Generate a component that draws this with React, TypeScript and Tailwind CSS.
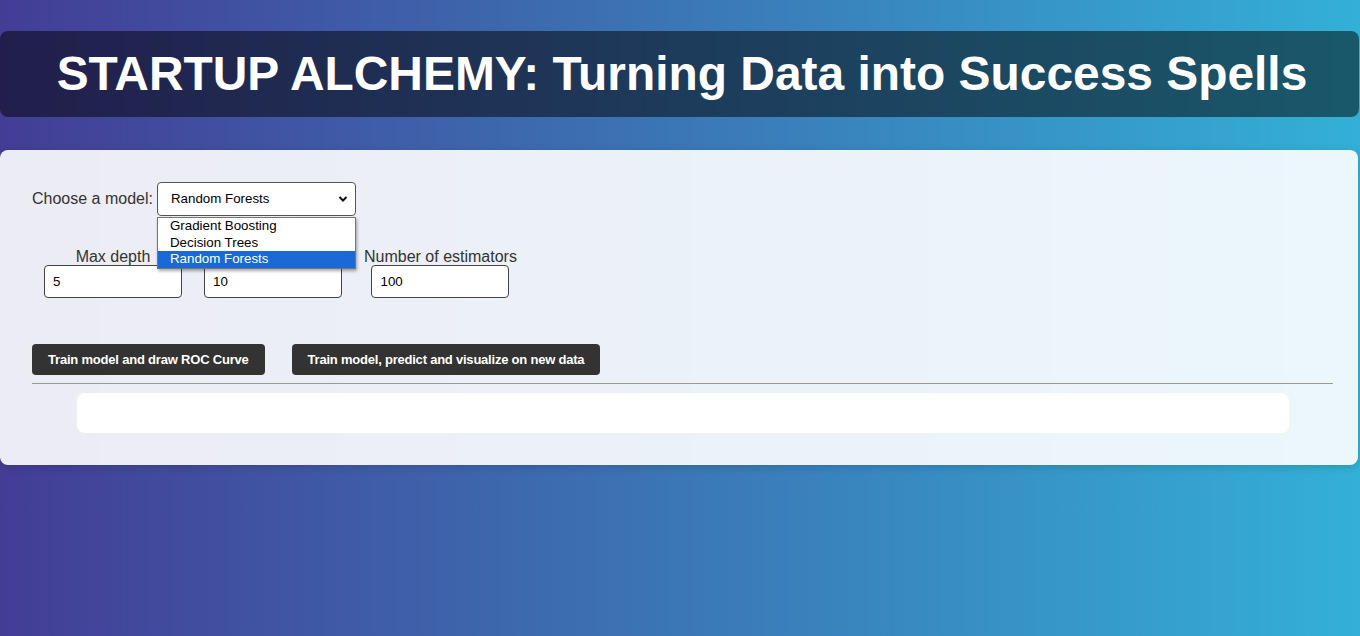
import React, { useState } from 'react';

const models = ['Gradient Boosting', 'Decision Trees', 'Random Forests'];

const params = [
  { label: 'Max depth', value: '5' },
  { label: 'Min samples split', value: '10' },
  { label: 'Number of estimators', value: '100' },
];

export default function App() {
  const [model, setModel] = useState('Random Forests');

  return (
    <div
      className="min-h-[636px] w-full bg-[linear-gradient(to_right,#433d96,#33b0d6)] pt-[31px] pb-10"
      style={{ fontFamily: '"Liberation Sans", Arial, sans-serif' }}
    >
      {/* Header */}
      <div className="mr-[1px] flex h-[86px] items-center justify-center rounded-lg bg-black/50 pl-[5px]">
        <h1 className="text-[47.9px] font-bold leading-none text-white">
          STARTUP ALCHEMY: Turning Data into Success Spells
        </h1>
      </div>

      {/* Main card */}
      <div className="mt-[33px] mr-[2px] rounded-lg bg-white/90 px-8 pt-8 pb-8 shadow-[0_2px_8px_rgba(0,0,0,0.15)]">
        <div className="flex items-center">
          <label className="mr-[4px] text-[16px] text-[#333]">Choose a model:</label>
          <div className="relative">
            <div className="flex h-[34px] w-[199px] items-center justify-between rounded-[4px] border border-[#555] bg-white pr-[7px] pl-[13px] text-[13.33px] text-black">
              <span>{model}</span>
              <svg width="10" height="8" viewBox="0 0 10 8">
                <path d="M1.5 2l3.5 3.5L8.5 2" fill="none" stroke="#111" strokeWidth="2" />
              </svg>
            </div>
            {/* open dropdown list */}
            <div className="absolute top-[35px] left-0 z-10 w-[199px] border border-[#767676] bg-white text-[13.33px] leading-[16.5px] text-black shadow-[1px_2px_3px_rgba(0,0,0,0.35)]">
              {models.map((m) => (
                <div
                  key={m}
                  onClick={() => setModel(m)}
                  className={m === model ? 'bg-[#1a69d4] pl-[12px] text-white' : 'pl-[12px]'}
                >
                  {m}
                </div>
              ))}
            </div>
          </div>
        </div>

        {/* Parameters */}
        <div className="mt-[32px] ml-[12px] flex items-end gap-[22px]">
          {params.map((p) => (
            <div key={p.label} className="flex flex-col items-center">
              <label className="text-[16px] leading-[18px] text-[#333]">{p.label}</label>
              <input
                defaultValue={p.value}
                className="mt-[-1px] h-[33px] w-[138px] rounded-[4px] border border-[#444] bg-white px-[8px] text-[13.33px] text-black"
              />
            </div>
          ))}
        </div>

        {/* Buttons */}
        <div className="mt-[46px] flex gap-[27px]">
          <button className="h-[31px] rounded-[4px] bg-[#333] px-4 text-[13px] font-bold tracking-[-0.2px] text-white">
            Train model and draw ROC Curve
          </button>
          <button className="h-[31px] rounded-[4px] bg-[#333] px-4 text-[13px] font-bold tracking-[-0.22px] text-white">
            Train model, predict and visualize on new data
          </button>
        </div>

        <hr className="mt-2 mr-[-7px] border-t border-[#999]" />

        <div className="mt-[9px] mr-[37px] ml-[45px] h-[40px] rounded-lg bg-white" />
      </div>
    </div>
  );
}
